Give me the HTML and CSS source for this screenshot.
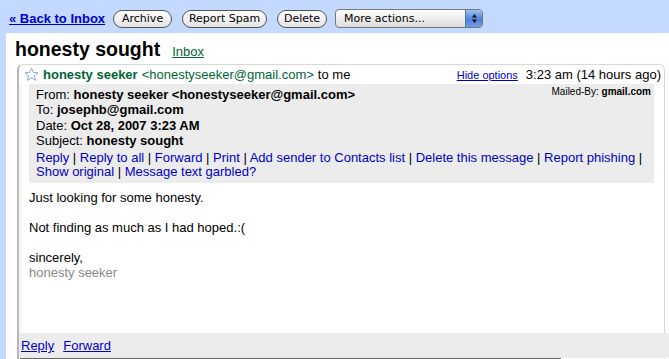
FILE: index.html
```html
<!DOCTYPE html>
<html>
<head>
    <meta charset="UTF-8">
    <title>honesty sought</title>
    <link rel="stylesheet" href="styles.css">
</head>
<body>
    <div class="topbar">
        <a class="back-link" href="#">&laquo; Back to Inbox</a>
        <button class="pill w-archive">Archive</button>
        <button class="pill w-spam">Report Spam</button>
        <button class="pill w-delete">Delete</button>
        <div class="select">
            <span class="select-label">More actions...</span>
            <span class="select-arrows">
                <svg width="7" height="11" viewBox="0 0 7 11"><path d="M3.5 1 L6 4.5 H1 Z M3.5 10 L6 6.5 H1 Z" fill="#111"/></svg>
            </span>
        </div>
    </div>
    <div class="main">
        <div class="title-row">
            <h1>honesty sought</h1>
            <a class="label" href="#">Inbox</a>
        </div>
        <div class="card">
            <div class="msg-head">
                <svg class="star" width="15" height="15" viewBox="0 0 15 15"><path d="M7.5 1 L9.3 5.4 L14 5.7 L10.4 8.7 L11.6 13.4 L7.5 10.8 L3.4 13.4 L4.6 8.7 L1 5.7 L5.7 5.4 Z" fill="#fff" stroke="#8aa8e8" stroke-width="1" stroke-linejoin="round"/></svg>
                <span class="sender">honesty seeker</span>
                <span class="sender-mail">&lt;honestyseeker@gmail.com&gt;</span>
                <span class="to">to me</span>
                <span class="spacer"></span>
                <a class="hide-opts" href="#">Hide options</a>
                <span class="time">3:23 am (14 hours ago)</span>
            </div>
            <div class="details">
                <div class="mailed-by">Mailed-By: <b>gmail.com</b></div>
                <div>From: <b>honesty seeker &lt;honestyseeker@gmail.com&gt;</b></div>
                <div>To: <b>josephb@gmail.com</b></div>
                <div>Date: <b>Oct 28, 2007 3:23 AM</b></div>
                <div>Subject: <b>honesty sought</b></div>
                <div class="actions">
                    <a href="#">Reply</a> | <a href="#">Reply to all</a> | <a href="#">Forward</a> | <a href="#">Print</a> | <a href="#">Add sender to Contacts list</a> | <a href="#">Delete this message</a> | <a href="#">Report phishing</a> |<br>
                    <a href="#">Show original</a> | <a href="#">Message text garbled?</a>
                </div>
            </div>
            <div class="msg-body">
                <p>Just looking for some honesty.</p>
                <p>Not finding as much as I had hoped.:(</p>
                <p>sincerely,<br><span class="sig">honesty seeker</span></p>
            </div>
            <div class="reply-bar">
                <a href="#">Reply</a>
                <a href="#">Forward</a>
            </div>
            <div class="reply-box"></div>
        </div>
    </div>
</body>
</html>
```

FILE: styles.css
```css
body {
    margin: 0;
    background: #c3d9ff;
    font-family: "Liberation Sans", Arial, sans-serif;
    font-size: 13px;
    color: #000;
    overflow: hidden;
}

a {
    color: #0000cc;
}

.topbar {
    display: flex;
    align-items: center;
    height: 33px;
    padding-left: 9px;
    padding-top: 4px;
    box-sizing: border-box;
}
.back-link {
    font-size: 13px;
    font-weight: bold;
    margin-right: 8px;
}
.pill {
    height: 18px;
    margin-right: 10px;
    padding: 0;
    border: 1px solid #555;
    border-radius: 9px;
    background: linear-gradient(#ffffff, #e4e4e4);
    font-family: "DejaVu Sans", sans-serif;
    font-size: 11px;
    color: #000;
}
.w-archive { width: 59px; }
.w-spam { width: 85px; }
.w-delete { width: 50px; margin-right: 8px; }

.select {
    display: flex;
    align-items: center;
    width: 148px;
    height: 19px;
    box-sizing: border-box;
    border: 1px solid #777;
    border-radius: 4px;
    background: linear-gradient(#ffffff, #dcdcdc);
    font-family: "DejaVu Sans", sans-serif;
    font-size: 11px;
    overflow: hidden;
}
.select-label {
    flex: 1;
    padding-left: 8px;
}
.select-arrows {
    display: flex;
    align-items: center;
    justify-content: center;
    width: 16px;
    height: 100%;
    background: linear-gradient(#9fc0f2, #4f82dc 55%, #6f9ce6);
    border-left: 1px solid #5577aa;
}

.main {
    margin-left: 6px;
    background: #fff;
    height: 326px;
    padding-top: 5px;
    box-sizing: border-box;
}

.title-row {
    display: flex;
    align-items: baseline;
    padding-left: 9px;
    height: 26px;
}
.title-row h1 {
    margin: 0;
    font-size: 19.5px;
    font-weight: bold;
}
.label {
    margin-left: 12px;
    font-size: 13px;
    color: #006633;
}

.card {
    margin-left: 11px;
    margin-right: 4px;
    border: 1px solid #d8d8d8;
    border-bottom: none;
    border-left: 2px solid #b8b8b8;
    border-radius: 6px 6px 0 0;
    height: 300px;
    background:
        linear-gradient(90deg, transparent 0, #f2f2f2 1px, #fafafa 3px, transparent 5px) no-repeat 0 20px / 6px 250px,
        #fff;
}

.msg-head {
    display: flex;
    align-items: center;
    height: 19px;
    padding-left: 5px;
    padding-right: 3px;
}
.star {
    margin-right: 4px;
}
.sender {
    font-weight: bold;
    color: #006633;
    margin-right: 4px;
}
.sender-mail {
    color: #006633;
    margin-right: 4px;
}
.spacer {
    flex: 1;
}
.hide-opts {
    font-size: 11px;
    margin-right: 8px;
}

.details {
    position: relative;
    margin: 0 10px 0 10px;
    padding: 3px 7px 4px;
    background: #ececec;
    line-height: 15.4px;
}
.mailed-by {
    position: absolute;
    right: 3px;
    top: 0;
    font-size: 10px;
}
.actions {
    margin-top: 2px;
    line-height: 14px;
}
.actions a {
    text-decoration: none;
}

.msg-body {
    padding: 7px 10px 0;
    line-height: 15px;
    height: 143px;
}
.msg-body p {
    margin: 0 0 15px;
}
.sig {
    color: #888;
}

.reply-bar {
    display: flex;
    gap: 9px;
    height: 25px;
    align-items: center;
    padding-left: 2px;
    padding-top: 1px;
    box-sizing: border-box;
    background: #ececec;
    margin-right: -5px;
}
.reply-box {
    width: 541px;
    margin-left: 1px;
    border-top: 2px solid #666;
}
```
